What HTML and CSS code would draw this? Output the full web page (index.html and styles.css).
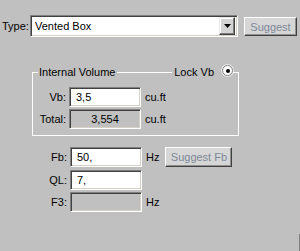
FILE: index.html
```html
<!DOCTYPE html>
<html>
<head>
<meta charset="utf-8">
<link rel="stylesheet" href="styles.css">
</head>
<body>
<div class="panel">
  <div class="type-row">
    <span class="type-label">Type:</span>
    <div class="select">
      <span class="select-text">Vented Box</span>
      <span class="select-btn"><svg width="7" height="4" viewBox="0 0 7 4"><path d="M0 0H7L3.5 4Z" fill="#000"/></svg></span>
    </div>
    <button class="btn btn-suggest">Suggest</button>
  </div>

  <div class="group">
    <div class="group-head">
      <span class="seg seg-left"></span>
      <span class="legend">Internal Volume</span>
      <span class="seg seg-fill"></span>
      <span class="legend legend-lock">Lock Vb</span>
      <span class="radio"><span class="radio-dot"></span></span>
      <span class="seg seg-right"></span>
    </div>
    <div class="group-body">
      <div class="row">
        <span class="lbl lbl-group">Vb:</span>
        <div class="field">3,5</div>
        <span class="unit">cu.ft</span>
      </div>
      <div class="row">
        <span class="lbl lbl-group">Total:</span>
        <div class="field field-disabled field-center">3,554</div>
        <span class="unit">cu.ft</span>
      </div>
    </div>
  </div>

  <div class="rows">
    <div class="row">
      <span class="lbl">Fb:</span>
      <div class="field">50,</div>
      <span class="unit">Hz</span>
      <button class="btn btn-fb">Suggest Fb</button>
    </div>
    <div class="row row-ql">
      <span class="lbl">QL:</span>
      <div class="field">7,</div>
    </div>
    <div class="row">
      <span class="lbl">F3:</span>
      <div class="field field-disabled"></div>
      <span class="unit">Hz</span>
    </div>
  </div>
  <span class="edge"></span>
</div>
</body>
</html>
```

FILE: styles.css
```css
html, body {
  margin: 0;
  padding: 0;
}
body {
  width: 300px;
  height: 251px;
  overflow: hidden;
  background: #c0c0c0;
  font-family: "Liberation Sans", Arial, sans-serif;
  font-size: 11px;
  color: #000;
}
.panel {
  position: relative;
  width: 300px;
  height: 251px;
  padding-top: 15px;
  box-sizing: border-box;
}
.type-row {
  display: flex;
  align-items: flex-start;
  height: 22px;
}
.type-label {
  width: 30px;
  padding-left: 2px;
  box-sizing: border-box;
  line-height: 22px;
}
.select {
  width: 208px;
  height: 22px;
  box-sizing: border-box;
  background: #fff;
  border-top: 1px solid #808080;
  border-left: 1px solid #808080;
  border-right: 1px solid #fff;
  border-bottom: 1px solid #fff;
  box-shadow: inset 1px 1px 0 #404040, inset -1px -1px 0 #d4d0c8;
  display: flex;
  align-items: center;
  padding: 2px;
}
.select-text {
  flex: 1;
  padding-left: 2px;
}
.select-btn {
  width: 16px;
  height: 18px;
  box-sizing: border-box;
  background: #d4d4d4;
  border-top: 1px solid #e8e8e8;
  border-left: 1px solid #e8e8e8;
  border-right: 1px solid #404040;
  border-bottom: 1px solid #404040;
  box-shadow: inset -1px -1px 0 #808080, inset 1px 1px 0 #fff;
  display: flex;
  align-items: center;
  justify-content: center;
}
.btn {
  font-family: "Liberation Sans", Arial, sans-serif;
  font-size: 11px;
  color: #7d8898;
  background: #d6d6d6;
  border-top: 1px solid #fff;
  border-left: 1px solid #fff;
  border-right: 1px solid #404040;
  border-bottom: 1px solid #404040;
  box-shadow: inset -1px -1px 0 #909090;
  padding: 0;
  margin: 0;
  box-sizing: border-box;
}
.btn-suggest {
  width: 53px;
  height: 19px;
  margin-left: 6px;
  margin-top: 2px;
}
.group {
  margin-left: 32px;
  width: 207px;
  margin-top: 28px;
}
.group-head {
  display: flex;
  height: 14px;
  align-items: center;
}
.seg {
  align-self: flex-end;
  height: 7px;
  box-sizing: border-box;
  border-top: 1px solid #fff;
}
.seg-left {
  width: 6px;
  border-left: 1px solid #fff;
}
.seg-fill {
  flex: 1;
  margin-left: 2px;
}
.seg-right {
  width: 6px;
  border-right: 1px solid #fff;
}
.legend {
  padding-left: 1px;
  line-height: 14px;
}
.legend-lock {
  padding-left: 2px;
}
.radio {
  width: 11px;
  height: 11px;
  box-sizing: border-box;
  margin-left: 8px;
  margin-top: -3px;
  border-radius: 50%;
  background: #fff;
  border: 1px solid #808080;
  box-shadow: 0 0 0 1px #e8e8e8;
  display: flex;
  align-items: center;
  justify-content: center;
}
.radio-dot {
  width: 4px;
  height: 4px;
  border-radius: 50%;
  background: #000;
}
.group-body {
  border-left: 1px solid #fff;
  border-right: 1px solid #fff;
  border-bottom: 1px solid #fff;
  padding: 8px 0 6px;
  display: flex;
  flex-direction: column;
  gap: 2px;
}
.row {
  display: flex;
  align-items: center;
  height: 20px;
}
.lbl {
  width: 67px;
  text-align: right;
  padding-right: 3px;
  box-sizing: content-box;
}
.lbl-group {
  width: 33px;
}
.field {
  width: 72px;
  height: 20px;
  box-sizing: border-box;
  background: #fff;
  border-top: 1px solid #808080;
  border-left: 1px solid #808080;
  border-right: 1px solid #fff;
  border-bottom: 1px solid #fff;
  box-shadow: inset 1px 1px 0 #404040, inset -1px -1px 0 #d4d0c8;
  padding-left: 6px;
  line-height: 18px;
}
.field-disabled {
  background: #c0c0c0;
}
.field-center {
  text-align: center;
  padding-left: 0;
}
.unit {
  margin-left: 4px;
}
.rows {
  margin-top: 11px;
  display: flex;
  flex-direction: column;
  gap: 2px;
}
.row-ql {
  margin-top: 1px;
}
.btn-fb {
  width: 67px;
  height: 20px;
  margin-left: 6px;
}
.edge {
  position: absolute;
  right: 0;
  bottom: 0;
  width: 1px;
  height: 17px;
  background: #808080;
}
```
